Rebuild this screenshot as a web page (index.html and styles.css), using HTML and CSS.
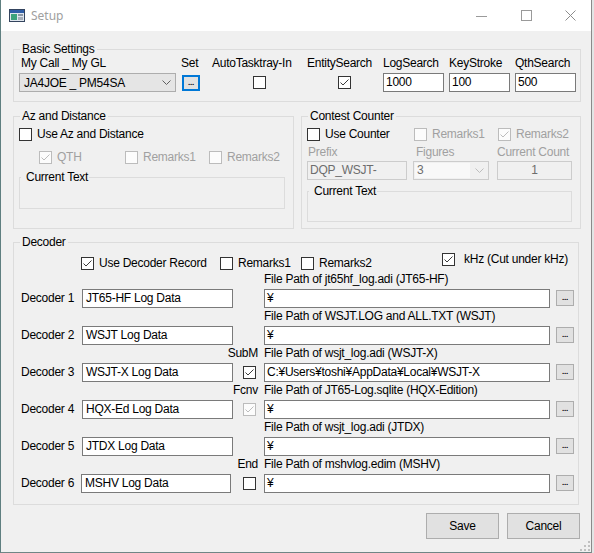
FILE: index.html
```html
<!DOCTYPE html>
<html lang="en">
<head>
<meta charset="utf-8">
<title>Setup</title>
<link rel="stylesheet" href="styles.css">
</head>
<body>
<div class="window">
  <div class="titlebar">
    <svg class="appicon" width="16" height="16" viewBox="0 0 16 16">
      <rect x="0.5" y="1.5" width="15" height="12" fill="#dfe6ee" stroke="#34445e"/>
      <rect x="1" y="2" width="14" height="3" fill="#2f5ea8"/>
      <rect x="2" y="6" width="6" height="6" fill="#3ca27c"/>
      <rect x="9" y="6" width="5" height="2" fill="#8a96a6"/>
      <rect x="9" y="9" width="5" height="3" fill="#a6aeb9"/>
    </svg>
    <span class="title">Setup</span>
    <div class="winctrls">
      <div class="wbtn wmin"><svg width="11" height="10" viewBox="0 0 11 10"><path d="M0 5.5H11" stroke="#9a9a9a"/></svg></div>
      <div class="wbtn wmax"><svg width="11" height="11" viewBox="0 0 11 11"><rect x="0.5" y="0.5" width="10" height="10" fill="none" stroke="#9a9a9a"/></svg></div>
      <div class="wbtn wclose"><svg width="11" height="11" viewBox="0 0 11 11"><path d="M0.5 0.5L10.5 10.5M10.5 0.5L0.5 10.5" stroke="#8c8c8c"/></svg></div>
    </div>
  </div>

  <div class="content">
    <fieldset class="group basic">
      <legend>Basic Settings</legend>
      <div class="basic-row">
        <div class="bcol c-call">
          <div class="blbl">My Call _ My GL</div>
          <div class="bctl">
            <div class="combo call-combo"><span class="combo-text">JA4JOE _ PM54SA</span><svg class="chev" width="9" height="5" viewBox="0 0 9 5"><path d="M0.5 0.5L4.5 4.5L8.5 0.5" fill="none" stroke="#606060"/></svg></div>
          </div>
        </div>
        <div class="bcol c-set">
          <div class="blbl">Set</div>
          <div class="bctl"><div class="dotbtn focus">...</div></div>
        </div>
        <div class="bcol c-auto">
          <div class="blbl">AutoTasktray-In</div>
          <div class="bctl"><span class="box"></span></div>
        </div>
        <div class="bcol c-entity">
          <div class="blbl">EntitySearch</div>
          <div class="bctl"><span class="box"><svg class="chk" width="11" height="11" viewBox="0 0 11 11"><path d="M1.5 5.5L4 8L9.5 2.5"/></svg></span></div>
        </div>
        <div class="bcol c-num">
          <div class="blbl">LogSearch</div>
          <div class="bctl"><div class="tb num">1000</div></div>
        </div>
        <div class="bcol c-num">
          <div class="blbl">KeyStroke</div>
          <div class="bctl"><div class="tb num">100</div></div>
        </div>
        <div class="bcol c-num">
          <div class="blbl">QthSearch</div>
          <div class="bctl"><div class="tb num">500</div></div>
        </div>
      </div>
    </fieldset>

    <div class="mid-row">
      <fieldset class="group az">
        <legend>Az and Distance</legend>
        <div class="crow r1">
          <span class="cb"><span class="box"></span><span>Use Az and Distance</span></span>
        </div>
        <div class="crow r2">
          <span class="cb dis w86"><span class="box dis"><svg class="chk" width="11" height="11" viewBox="0 0 11 11"><path d="M1.5 5.5L4 8L9.5 2.5"/></svg></span><span>QTH</span></span>
          <span class="cb dis w84"><span class="box dis"></span><span>Remarks1</span></span>
          <span class="cb dis"><span class="box dis"></span><span>Remarks2</span></span>
        </div>
        <fieldset class="sub az-sub">
          <legend>Current Text</legend>
        </fieldset>
      </fieldset>

      <fieldset class="group contest">
        <legend>Contest Counter</legend>
        <div class="crow r1">
          <span class="cb w107"><span class="box"></span><span>Use Counter</span></span>
          <span class="cb dis w84"><span class="box dis"></span><span>Remarks1</span></span>
          <span class="cb dis"><span class="box dis"><svg class="chk" width="11" height="11" viewBox="0 0 11 11"><path d="M1.5 5.5L4 8L9.5 2.5"/></svg></span><span>Remarks2</span></span>
        </div>
        <div class="ct-grid ct-labels">
          <span class="pl1">Prefix</span>
          <span class="pl3">Figures</span>
          <span>Current Count</span>
        </div>
        <div class="ct-grid ct-ctrls">
          <div class="tb dis prefix">DQP_WSJT-</div>
          <div class="combo fig-combo"><span class="fig-text">3</span><svg class="chev" width="9" height="5" viewBox="0 0 9 5"><path d="M0.5 0.5L4.5 4.5L8.5 0.5" fill="none" stroke="#bdbdbd"/></svg></div>
          <div class="tb dis count">1</div>
        </div>
        <fieldset class="sub ct-sub">
          <legend>Current Text</legend>
        </fieldset>
      </fieldset>
    </div>

    <fieldset class="group decoder">
      <legend>Decoder</legend>
      <div class="dchk">
        <span class="cb w139"><span class="box"><svg class="chk" width="11" height="11" viewBox="0 0 11 11"><path d="M1.5 5.5L4 8L9.5 2.5"/></svg></span><span>Use Decoder Record</span></span>
        <span class="cb w81"><span class="box"></span><span>Remarks1</span></span>
        <span class="cb w141"><span class="box"></span><span>Remarks2</span></span>
        <span class="cb khz"><span class="box"><svg class="chk" width="11" height="11" viewBox="0 0 11 11"><path d="M1.5 5.5L4 8L9.5 2.5"/></svg></span><span>kHz (Cut under kHz)</span></span>
      </div>

      <div class="drow">
        <div class="dpath-lbl">File Path of jt65hf_log.adi (JT65-HF)</div>
        <div class="dname-lbl">Decoder 1</div>
        <div class="tb dname">JT65-HF Log Data</div>
        <div class="tb dpath">¥</div>
        <div class="dotbtn dbtn">...</div>
      </div>
      <div class="drow">
        <div class="dpath-lbl">File Path of WSJT.LOG and ALL.TXT (WSJT)</div>
        <div class="dname-lbl">Decoder 2</div>
        <div class="tb dname">WSJT Log Data</div>
        <div class="tb dpath">¥</div>
        <div class="dotbtn dbtn">...</div>
      </div>
      <div class="drow">
        <div class="dmid-lbl"><span>SubM</span></div>
        <div class="dpath-lbl">File Path of wsjt_log.adi (WSJT-X)</div>
        <div class="dname-lbl">Decoder 3</div>
        <div class="tb dname">WSJT-X Log Data</div>
        <div class="dmid-ctl"><span class="box"><svg class="chk" width="11" height="11" viewBox="0 0 11 11"><path d="M1.5 5.5L4 8L9.5 2.5"/></svg></span></div>
        <div class="tb dpath">C:¥Users¥toshi¥AppData¥Local¥WSJT-X</div>
        <div class="dotbtn dbtn">...</div>
      </div>
      <div class="drow">
        <div class="dmid-lbl"><span>Fcnv</span></div>
        <div class="dpath-lbl">File Path of JT65-Log.sqlite (HQX-Edition)</div>
        <div class="dname-lbl">Decoder 4</div>
        <div class="tb dname">HQX-Ed Log Data</div>
        <div class="dmid-ctl"><span class="box dis"><svg class="chk" width="11" height="11" viewBox="0 0 11 11"><path d="M1.5 5.5L4 8L9.5 2.5"/></svg></span></div>
        <div class="tb dpath">¥</div>
        <div class="dotbtn dbtn">...</div>
      </div>
      <div class="drow">
        <div class="dpath-lbl">File Path of wsjt_log.adi (JTDX)</div>
        <div class="dname-lbl">Decoder 5</div>
        <div class="tb dname">JTDX Log Data</div>
        <div class="tb dpath">¥</div>
        <div class="dotbtn dbtn">...</div>
      </div>
      <div class="drow">
        <div class="dmid-lbl"><span>End</span></div>
        <div class="dpath-lbl">File Path of mshvlog.edim (MSHV)</div>
        <div class="dname-lbl">Decoder 6</div>
        <div class="tb dname shift">MSHV Log Data</div>
        <div class="dmid-ctl"><span class="box"></span></div>
        <div class="tb dpath">¥</div>
        <div class="dotbtn dbtn">...</div>
      </div>
    </fieldset>

    <div class="footer">
      <button class="btn" type="button">Save</button>
      <button class="btn" type="button">Cancel</button>
    </div>
  </div>

  <svg class="grip" width="10" height="10" viewBox="0 0 10 10">
    <rect x="8" y="0" width="2" height="2" fill="#c0c0c0"/>
    <rect x="4" y="4" width="2" height="2" fill="#c0c0c0"/>
    <rect x="8" y="4" width="2" height="2" fill="#c0c0c0"/>
    <rect x="0" y="8" width="2" height="2" fill="#c0c0c0"/>
    <rect x="4" y="8" width="2" height="2" fill="#c0c0c0"/>
    <rect x="8" y="8" width="2" height="2" fill="#c0c0c0"/>
  </svg>
</div>
</body>
</html>
```

FILE: styles.css
```css
* { box-sizing: border-box; }
html, body { margin: 0; padding: 0; }
body {
  width: 594px;
  height: 553px;
  overflow: hidden;
  background: #e2e5e5;
  font-family: "Liberation Sans", Arial, sans-serif;
  font-size: 12px;
  letter-spacing: -0.25px;
  color: #000;
}
.window {
  position: relative;
  width: 592px;
  height: 553px;
  background: #f0f0f0;
  border-left: 1px solid #5f7f80;
  border-right: 1px solid #8a8a8a;
  border-bottom: 1px solid #6f8686;
}

/* title bar */
.titlebar { display: flex; align-items: center; height: 31px; background: #fff; }
.appicon { margin-left: 8px; flex: none; }
.title { margin-left: 6px; font-family: "Noto Sans", "Open Sans", sans-serif; font-size: 12px; letter-spacing: 0; color: #a0a0a0; }
.winctrls { display: flex; margin-left: auto; height: 31px; }
.wbtn { display: flex; align-items: center; justify-content: center; height: 31px; }
.wbtn svg { display: block; }
.wmin { width: 44px; }
.wmax { width: 46px; }
.wclose { width: 42px; }

/* content */
.content { padding: 11px 0 0 12px; }
.group { margin: 0; padding: 0 5px; border: 1px solid #dcdcdc; min-width: 0; }
.group > legend { margin-left: 1px; padding: 0 2px; height: 14px; line-height: 14px; }

.basic { width: 568px; height: 60px; }
.basic-row { display: flex; }
.bcol { display: flex; flex-direction: column; flex: none; }
.blbl { height: 14px; line-height: 14px; white-space: nowrap; }
.bctl { display: flex; align-items: center; height: 19px; margin-top: 3px; }
.c-call { width: 162px; }
.c-call .blbl { padding-left: 2px; }
.c-set { width: 31px; }
.c-set .bctl { padding-left: 1px; }
.c-auto { width: 95px; }
.c-auto .bctl { padding-left: 41px; }
.c-entity { width: 76px; }
.c-entity .bctl { padding-left: 31px; }
.c-num { width: 66px; }

/* controls */
.tb {
  height: 19px;
  border: 1px solid #7a7a7a;
  background: #fff;
  line-height: 17px;
  padding-left: 2px;
  white-space: nowrap;
  overflow: hidden;
}
.tb.dis { border-color: #cccccc; background: #f0f0f0; color: #6d6d6d; }
.num { width: 61px; }
.combo { display: flex; align-items: center; height: 19px; border: 1px solid #adadad; background: #e5e5e5; }
.combo-text { flex: 1; white-space: nowrap; }
.call-combo { width: 157px; padding-left: 4px; }
.chev { display: block; flex: none; margin-right: 4px; }

.dotbtn {
  display: flex;
  justify-content: center;
  align-items: flex-end;
  flex: none;
  width: 18px;
  height: 16px;
  border: 1px solid #adadad;
  background: #e1e1e1;
  font-size: 8px;
  font-weight: bold;
  letter-spacing: -0.3px;
  line-height: 8px;
  padding-bottom: 3px;
  color: #000;
}
.dotbtn.focus { border: 2px solid #0078d7; padding-bottom: 2px; }

.box {
  display: inline-block;
  flex: none;
  width: 13px;
  height: 13px;
  border: 1px solid #333;
  background: #fff;
}
.box svg { display: block; }
.box.dis { border-color: #bcbcbc; background: #fcfcfc; }
.chk path { fill: none; stroke: #3c3c3c; stroke-width: 1; }
.box.dis .chk path { stroke: #bcbcbc; }
.cb { display: flex; align-items: center; height: 14px; white-space: nowrap; flex: none; }
.cb .box { margin-right: 5px; }
.cb.dis { color: #a0a0a0; }

/* middle row */
.mid-row { display: flex; gap: 7px; margin-top: 7px; }
.az { width: 281px; height: 120px; }
.contest { width: 280px; height: 120px; }
.crow { display: flex; align-items: center; height: 20px; }
.r1 { margin-top: 1px; }
.az .r2 { margin-top: 3px; padding-left: 20px; }
.w84 { width: 84px; }
.w86 { width: 86px; }
.w107 { width: 107px; }
.sub { margin: 0; padding: 0; border: 1px solid #dcdcdc; min-width: 0; }
.sub > legend { margin-left: 1px; padding: 0 1px 0 5px; height: 14px; line-height: 14px; }
.az-sub { margin-top: 3px; width: 266px; height: 39px; }
.ct-sub { margin-top: 4px; width: 265px; height: 38px; }

.ct-grid { display: grid; grid-template-columns: 106px 84px 80px; }
.ct-labels { margin-top: 1px; height: 14px; line-height: 14px; color: #a0a0a0; white-space: nowrap; }
.pl1 { padding-left: 1px; }
.pl3 { padding-left: 3px; }
.ct-ctrls { margin-top: 2px; height: 19px; }
.prefix { width: 100px; }
.fig-combo { width: 76px; border-color: #cccccc; background: #f0f0f0; padding-left: 1px; }
.fig-text { flex: 1; height: 15px; line-height: 15px; padding-left: 2px; margin-right: 19px; background: #f8f8f8; color: #6d6d6d; }
.fig-combo .chev { margin-right: 4px; margin-left: -14px; }
.count { width: 75px; text-align: center; padding-left: 0; }

/* decoder */
.decoder { width: 566px; height: 270px; margin-top: 6px; }
.dchk { display: flex; align-items: flex-start; height: 23px; padding-left: 62px; }
.dchk .cb { margin-top: 7px; }
.dchk .khz { margin-top: 3px; }
.dchk .khz .box { margin-right: 9px; }
.w81 { width: 81px; }
.w139 { width: 139px; }
.w141 { width: 141px; }

.drow {
  display: grid;
  grid-template-columns: 63px 151px 31px 286px 24px;
  grid-template-rows: 14px 19px;
  row-gap: 3px;
  margin-bottom: 1px;
}
.dmid-lbl {
  grid-row: 1;
  grid-column: 3;
  display: flex;
  justify-content: flex-end;
  padding-right: 6px;
  line-height: 14px;
  white-space: nowrap;
}
.dmid-lbl span { flex: none; }
.dpath-lbl { grid-row: 1; grid-column: 4 / 6; line-height: 14px; white-space: nowrap; }
.dname-lbl { grid-row: 2; grid-column: 1; line-height: 19px; padding-left: 2px; white-space: nowrap; }
.dname { grid-row: 2; grid-column: 2; padding-left: 3px; }
.dname.shift { margin-left: -1px; width: 150px; }
.dmid-ctl { grid-row: 2; grid-column: 3; display: flex; align-items: center; justify-content: flex-end; padding-right: 8px; }
.dpath { grid-row: 2; grid-column: 4; }
.dbtn { grid-row: 2; grid-column: 5; margin: 1px 0 0 6px; }

/* footer */
.footer { display: flex; justify-content: flex-end; gap: 8px; width: 567px; margin-top: 8px; }
.btn {
  width: 73px;
  height: 26px;
  margin: 0;
  padding: 0;
  border: 1px solid #adadad;
  background: #e1e1e1;
  font-family: inherit;
  font-size: 12px;
  letter-spacing: -0.25px;
  color: #000;
}

.grip { position: absolute; right: 1px; bottom: 1px; display: block; }
```
